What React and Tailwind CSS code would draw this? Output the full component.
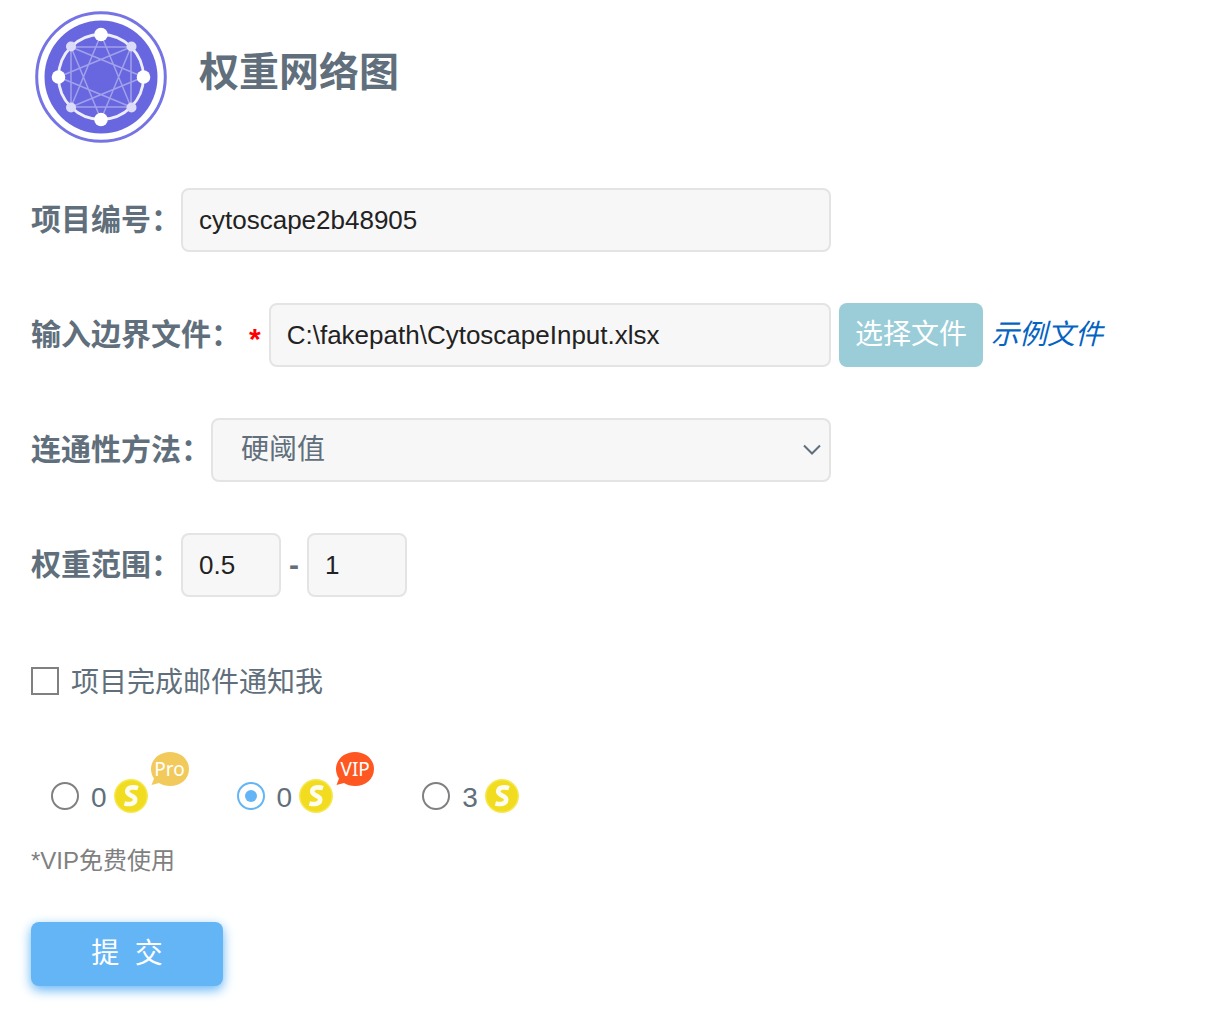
import React, { useState } from 'react';

const inputClass =
  'h-16 min-w-0 rounded-lg border-2 border-[#e4e4e4] bg-[#f7f7f7] px-4 text-[26px] text-[#222222] outline-none';

const Logo = () => {
  const lines = [
    'M66 23.5 L96 96 M66 23.5 L36 96',
    'M66 108.5 L96 36 M66 108.5 L36 36',
    'M23.5 66 L96 36 M23.5 66 L96 96',
    'M108.5 66 L36 36 M108.5 66 L36 96',
    'M36 36 H96 V96 H36 Z'
  ];

  return (
    <svg viewBox="0 0 132 132" className="h-[132px] w-[132px] shrink-0" aria-hidden="true">
      <circle cx="66" cy="66" r="64.3" fill="#ffffff" stroke="#7674e4" strokeWidth="3" />
      <circle cx="66" cy="66" r="56.5" fill="#6867df" />
      <path d={lines.join(' ')} fill="none" stroke="#ffffff" strokeOpacity="0.38" strokeWidth="1.5" />
      <circle cx="66" cy="66" r="42.5" fill="none" stroke="#eeeefc" strokeWidth="2.8" />
      {[[36, 35.5], [96.5, 35.5], [36, 96.5], [96.5, 96.5]].map(([x, y]) => (
        <circle key={`${x}-${y}`} cx={x} cy={y} r="5" fill="#dddcf8" />
      ))}
      {[[66, 23.5], [108.5, 66], [66, 108.5], [23.5, 66]].map(([x, y]) => (
        <circle key={`${x}-${y}`} cx={x} cy={y} r="6.8" fill="#ffffff" />
      ))}
    </svg>
  );
};

const Coin = () => (
  <svg viewBox="0 0 34 34" className="h-[34px] w-[34px] shrink-0" aria-hidden="true">
    <circle cx="17" cy="17" r="17" fill="#f6e74e" />
    <circle cx="17" cy="17" r="15.5" fill="#f2dc20" />
    <path
      d="M24 9.2 C20 7.8 13.2 7.8 13.2 12.6 C13.2 16.8 21.2 16.4 21.2 20.6 C21.2 25.6 15 25.6 10.4 24.4"
      fill="none"
      stroke="#fffdf0"
      strokeWidth="4.6"
    />
  </svg>
);

const Badge = ({ text, color }) => (
  <span className="relative ml-[3px] flex h-[34px] w-[38px] items-center justify-center self-start">
    <svg viewBox="0 0 38 34" className="absolute inset-0 h-full w-full" aria-hidden="true">
      <path
        d="M19 0 C29.8 0 38 7.4 38 17 C38 26.8 29.8 34 19 34 C14.8 34 11 33 8 31 L0.5 33 L3 26.5 C1 23.8 0 20.6 0 17 C0 7.4 8.4 0 19 0 Z"
        fill={color}
      />
    </svg>
    <span className="relative font-['Noto_Sans',sans-serif] text-[19px] leading-none text-white">{text}</span>
  </span>
);

export default function App() {
  const [projectId, setProjectId] = useState('cytoscape2b48905');
  const [method, setMethod] = useState('hard');
  const [min, setMin] = useState('0.5');
  const [max, setMax] = useState('1');
  const [notify, setNotify] = useState(false);
  const [plan, setPlan] = useState('vip');

  const plans = [
    { id: 'pro', price: 0, badge: 'Pro', color: '#f2ca5c' },
    { id: 'vip', price: 0, badge: 'VIP', color: '#ff5722' },
    { id: 'normal', price: 3 }
  ];

  return (
    <main className="min-h-screen bg-white px-[31px] pt-[11px] pb-9 font-['Liberation_Sans','Noto_Sans_CJK_SC',sans-serif] text-[28px] leading-10 text-[#606f7b]">
      <header className="flex items-start gap-8 pl-1">
        <Logo />
        <h1 className="pt-8 text-[40px] leading-[58px] font-bold">权重网络图</h1>
      </header>

      <form className="mt-[45px]" onSubmit={(e) => e.preventDefault()}>
        <div className="flex flex-col gap-[51px]">
          <div className="flex max-w-[800px] items-center">
            <label htmlFor="project" className="shrink-0 text-[30px] font-bold">项目编号：</label>
            <input
              id="project"
              type="text"
              className={`${inputClass} flex-1`}
              value={projectId}
              onChange={(e) => setProjectId(e.target.value)}
            />
          </div>

          <div className="flex items-center gap-2">
            <div className="flex w-[800px] min-w-0 items-center gap-2">
              <label htmlFor="file" className="flex shrink-0 items-center gap-2 text-[30px] font-bold">
                输入边界文件：
                <span className="pt-2 text-[#ff0000]">*</span>
              </label>
              <input
                id="file"
                type="text"
                readOnly
                className={`${inputClass} flex-1`}
                value="C:\fakepath\CytoscapeInput.xlsx"
              />
            </div>
            <button type="button" className="h-16 shrink-0 rounded-lg bg-[#9acdd8] px-4 text-white">
              选择文件
            </button>
            <a href="#example" className="shrink-0 text-[#0563c1] italic">示例文件</a>
          </div>

          <div className="flex max-w-[800px] items-center">
            <label htmlFor="method" className="shrink-0 text-[30px] font-bold">连通性方法：</label>
            <div className="relative min-w-0 flex-1">
              <select
                id="method"
                className="block h-16 w-full appearance-none rounded-lg border-2 border-[#e4e4e4] bg-[#f7f7f7] px-7 outline-none"
                value={method}
                onChange={(e) => setMethod(e.target.value)}
              >
                <option value="hard">硬阈值</option>
                <option value="soft">软阈值</option>
              </select>
              <svg
                viewBox="0 0 18 12"
                className="pointer-events-none absolute top-[26px] right-[10px] h-3 w-[18px]"
                aria-hidden="true"
              >
                <path d="M1 1.5 L9 9.5 L17 1.5" fill="none" stroke="#606f7b" strokeWidth="2" />
              </svg>
            </div>
          </div>

          <div className="flex items-center">
            <label htmlFor="min" className="shrink-0 text-[30px] font-bold">权重范围：</label>
            <input
              id="min"
              type="text"
              className={`${inputClass} w-[100px]`}
              value={min}
              onChange={(e) => setMin(e.target.value)}
            />
            <label htmlFor="max" className="px-2 text-[30px] font-bold">-</label>
            <input
              id="max"
              type="text"
              className={`${inputClass} w-[100px]`}
              value={max}
              onChange={(e) => setMax(e.target.value)}
            />
          </div>
        </div>

        <div className="mt-16 flex h-10 items-center gap-3">
          <input
            id="notify"
            type="checkbox"
            className="h-7 w-7 appearance-none border-2 border-[#808080] bg-white checked:bg-[#64b5f6]"
            checked={notify}
            onChange={(e) => setNotify(e.target.checked)}
          />
          <label htmlFor="notify" className="pt-1">项目完成邮件通知我</label>
        </div>

        {/* Price options */}
        <div className="mt-[51px] flex items-end gap-12 pl-5">
          {plans.map((item) => (
            <label key={item.id} className="flex h-[61px] items-end">
              <input
                type="radio"
                name="plan"
                className="mr-3 mb-[3px] h-7 w-7 appearance-none rounded-full border-2 border-[#808080] bg-white p-[6px] checked:border-[#64b5f6] checked:bg-[#64b5f6] checked:bg-clip-content"
                checked={plan === item.id}
                onChange={() => setPlan(item.id)}
              />
              <span className="mr-[7px] leading-[30px]">{item.price}</span>
              <Coin />
              {item.badge && <Badge text={item.badge} color={item.color} />}
            </label>
          ))}
        </div>

        <p className="mt-7 text-[24px] text-[#808080]">*VIP免费使用</p>

        <button
          type="submit"
          className="mt-[41px] h-16 w-48 rounded-lg bg-[#64b5f6] whitespace-pre text-white shadow-[0_4px_12px_#64b5f6]"
        >
          提  交
        </button>
      </form>
    </main>
  );
}
